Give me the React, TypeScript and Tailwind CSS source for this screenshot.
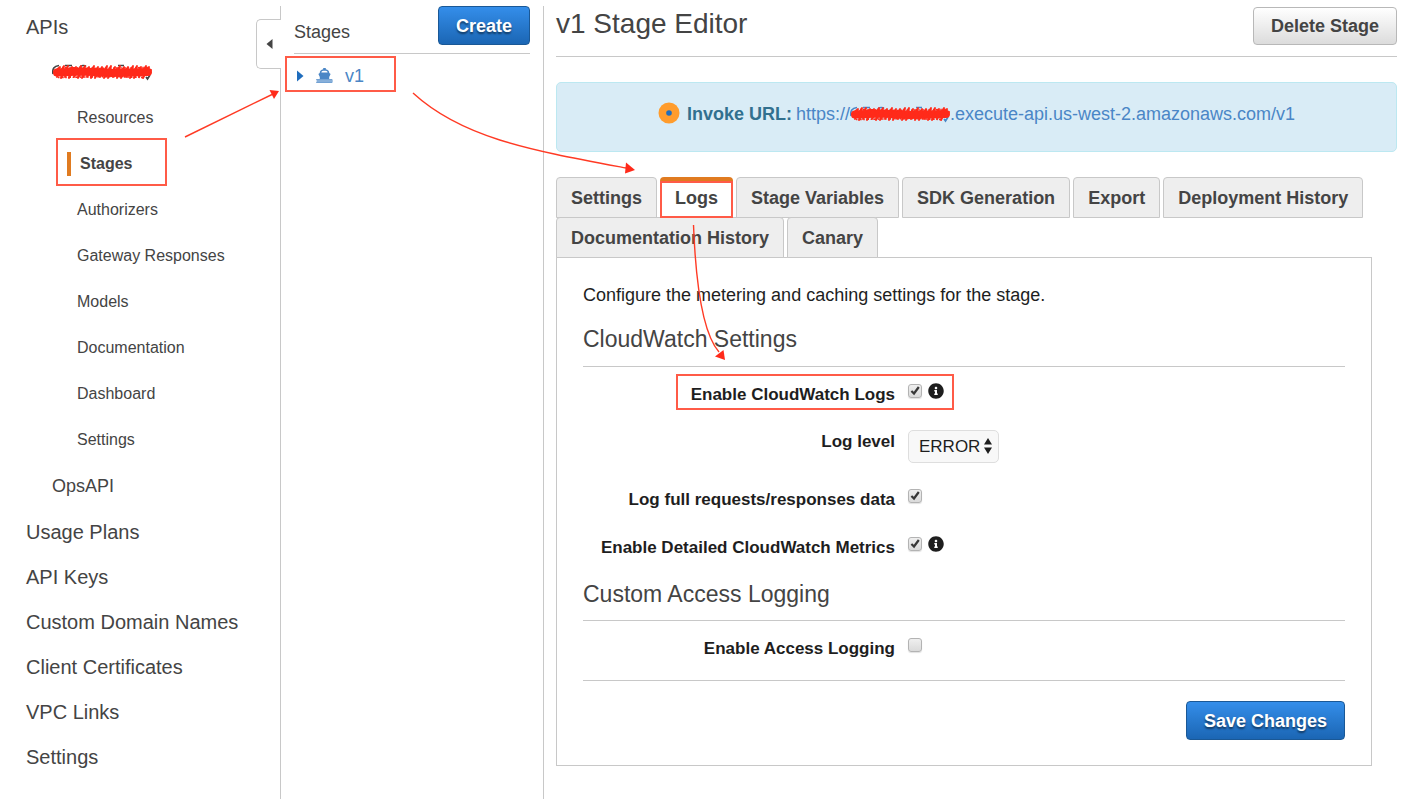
import type { ReactNode } from "react";
import { FaInfoCircle } from "react-icons/fa";

const apiSections = [
  "Resources",
  "Stages",
  "Authorizers",
  "Gateway Responses",
  "Models",
  "Documentation",
  "Dashboard",
  "Settings",
];

const accountSections = [
  "Usage Plans",
  "API Keys",
  "Custom Domain Names",
  "Client Certificates",
  "VPC Links",
  "Settings",
];

const tabs = [
  "Settings",
  "Logs",
  "Stage Variables",
  "SDK Generation",
  "Export",
  "Deployment History",
  "Documentation History",
  "Canary",
];

const scribblePath =
  "M2 9 L8 4 L5 14 L12 3 L9 15 L16 3 L13 14 L20 4 L17 15 L24 4 L22 14 L29 3 L26 15 L33 3 L30 15 L37 4 L35 14 L42 3 L39 15 L46 4 L43 15 L50 4 L48 14 L55 3 L52 15 L59 3 L56 15 L63 4 L61 14 L68 3 L65 15 L72 4 L69 15 L76 4 L74 14 L81 3 L78 15 L85 3 L82 15 L89 4 L87 14 L94 3 L91 15 L97 4 L95 12 L99 7";

function Scribble({ under }: { under: string }) {
  return (
    <svg width="100" height="18" viewBox="0 0 100 18" fill="none" aria-hidden="true">
      <path
        d="M1 11 C0 6 2 3 7 2.5 M13 2.5 H20 M28 4 C29 2 33 2 34 3.5 M66 2.5 H72 M94 14 L95.5 16 L98 12"
        stroke={under}
        strokeWidth="1.6"
      />
      <path d="M5 9.5 L30 8.5 L60 10 L96 9" stroke="#ff2a1a" strokeWidth="8" strokeLinecap="round" />
      <path d={scribblePath} stroke="#ff2a1a" strokeWidth="1.9" strokeLinejoin="round" strokeLinecap="round" />
      <path
        d="M6 14.5 L60 13.5 L92 14.5 M10 4.5 L45 5.5 L96 4.5"
        stroke="#ff2a1a"
        strokeWidth="1.6"
        strokeDasharray="1.5 1.2 3 1.6"
      />
    </svg>
  );
}

function Highlight({ className }: { className: string }) {
  return (
    <span
      aria-hidden="true"
      className={`pointer-events-none absolute border-2 border-[#ff5b47] ${className}`}
    />
  );
}

function ShipIcon() {
  return (
    <svg width="17" height="16" viewBox="0 0 17 16" aria-hidden="true">
      <g fill="#4a86c6">
        <path
          fillRule="evenodd"
          d="M7.2 0 H9.8 V1.2 C12 1.5 13.2 2.7 13.3 5 L14.6 6 L13.2 9 V11 H3.8 V9 L2.4 6 L3.7 5 C3.8 2.7 5 1.5 7.2 1.2 Z M5.4 4.6 H11.6 C11.5 3.5 10.9 3 9.8 2.8 H7.2 C6.1 3 5.5 3.5 5.4 4.6 Z"
        />
        <rect x="0.5" y="11" width="16" height="4" fillOpacity="0.55" />
      </g>
      <path d="M0.5 11.5 H16.5 M1.5 13 H16.5 M0.5 14.5 H16.5" stroke="#4a86c6" strokeWidth="1" strokeDasharray="1 1" />
    </svg>
  );
}

function PrimaryButton({ children }: { children: ReactNode }) {
  return (
    <button
      type="button"
      className="h-[39px] rounded-[4px] border border-[#1a5896] bg-linear-to-b from-[#348eea] to-[#1b66b4] px-[17px] text-[18px] leading-6 font-bold text-white [text-shadow:0_2px_2px_rgba(0,0,0,0.5)]"
    >
      {children}
    </button>
  );
}

function Check({ id, checked = false }: { id: string; checked?: boolean }) {
  return (
    <span className="relative mt-px block size-3.5">
      <input
        id={id}
        type="checkbox"
        defaultChecked={checked}
        className="peer block size-3.5 appearance-none rounded-[3px] border border-[#b3b3b3] bg-linear-to-b from-[#efefef] to-[#dadada] shadow-[0_1px_1px_rgba(0,0,0,0.12)]"
      />
      <svg
        viewBox="0 0 14 14"
        fill="none"
        stroke="#383838"
        aria-hidden="true"
        className="pointer-events-none absolute inset-0 hidden size-3.5 peer-checked:block"
      >
        <path d="M3.4 7 L6 9.5 L10.8 3" strokeWidth="2.2" />
      </svg>
    </span>
  );
}

function Info({ label }: { label: string }) {
  return (
    <button type="button" aria-label={label} className="ml-1.5 block text-[#1e1e1e]">
      <FaInfoCircle size={16} />
    </button>
  );
}

function Row({ id, label, className, children }: { id: string; label: string; className: string; children: ReactNode }) {
  return (
    <div className={`flex items-start gap-[13px] ${className}`}>
      <label htmlFor={id} className="w-[312px] shrink-0 text-right text-[17px] leading-6 font-bold whitespace-nowrap text-[#1e1e1e]">
        {label}
      </label>
      <div className="flex items-start">{children}</div>
    </div>
  );
}

function Sidebar() {
  return (
    <div className="flex w-[281px] shrink-0 pt-1.5">
      <nav aria-label="API Gateway" className="min-w-0 flex-1 text-[#444]">
        <a href="#apis" className="-mt-0.5 flex h-[45px] items-center pl-[26px] text-[20px]">
          APIs
        </a>
        <a href="#api" aria-label="Redacted API" className="flex h-[46px] items-center pl-[52px]">
          <Scribble under="#444" />
        </a>
        <ul className="text-[16px]">
          {apiSections.map((name) => (
            <li key={name} className="flex h-[46px] items-center">
              {name === "Stages" ? (
                <a href="#stages" aria-current="page" className="relative ml-[67px] border-l-4 border-[#e07b20] pl-[9px] leading-6 font-bold">
                  Stages
                  <Highlight className="-top-[14px] -left-[15px] h-12 w-[111px]" />
                </a>
              ) : (
                <a href={`#${name}`} className="pl-[77px] whitespace-nowrap">
                  {name}
                </a>
              )}
            </li>
          ))}
        </ul>
        <a href="#ops" className="flex h-[46px] items-center pl-[52px] text-[18px]">
          OpsAPI
        </a>
        <ul className="text-[20px]">
          {accountSections.map((name) => (
            <li key={name}>
              <a href={`#account-${name}`} className="flex h-[45px] items-center pl-[26px] whitespace-nowrap">
                {name}
              </a>
            </li>
          ))}
        </ul>
      </nav>
      <div className="flex w-[25px] shrink-0 flex-col">
        <div className="h-[13px] border-r border-[#c8c8c8]" />
        <button
          type="button"
          aria-label="Collapse navigation"
          className="flex h-[50px] items-center justify-center rounded-l-[5px] border border-r-0 border-[#c8c8c8]"
        >
          <svg width="7" height="10" viewBox="0 0 7 10" fill="#444" aria-hidden="true">
            <path d="M6.5 0 V10 L0.5 5 Z" />
          </svg>
        </button>
        <div className="flex-1 border-r border-[#c8c8c8]" />
      </div>
    </div>
  );
}

function StageList() {
  return (
    <section aria-label="Stages" className="flex w-[263px] shrink-0 pt-1.5">
      <div className="flex-1 border-r border-[#c8c8c8] px-[13px]">
        <div className="flex h-12 items-start justify-between border-b border-[#c8c8c8]">
          <h2 className="pt-3 text-[18px] leading-7 text-[#444]">Stages</h2>
          <PrimaryButton>Create</PrimaryButton>
        </div>
        <div className="relative mt-2.5 flex h-6 items-center">
          <button type="button" aria-label="Expand v1" className="ml-[3px] flex">
            <svg width="7" height="12" viewBox="0 0 7 12" fill="#1f6dbd" aria-hidden="true">
              <path d="M0 0.5 V11.5 L6.5 6 Z" />
            </svg>
          </button>
          <a href="#v1" className="ml-3 flex items-center gap-3 text-[18px] leading-6 text-[#4a86c6]">
            <ShipIcon />
            v1
          </a>
          <Highlight className="-top-2 -left-[9px] h-9 w-[111px]" />
        </div>
      </div>
    </section>
  );
}

function StageEditor() {
  return (
    <main className="min-w-0 flex-1 pt-1.5 pr-1.5 pb-8 pl-3">
      <header className="flex h-[51px] items-start justify-between border-b border-[#c8c8c8] pt-px">
        <h1 className="text-[28px] leading-[34px] text-[#444]">v1 Stage Editor</h1>
        <button
          type="button"
          className="h-[38px] rounded-[4px] border border-[#b8b8b8] bg-linear-to-b from-white to-[#dcdcdc] px-[17px] text-[18px] leading-6 font-bold text-[#444]"
        >
          Delete Stage
        </button>
      </header>

      <div className="mt-[25px] flex h-[70px] items-start justify-center rounded-[5px] border border-[#bce8f1] bg-[#d9ecf6] pt-[19px] text-[18px] leading-6">
        <svg width="22" height="22" viewBox="0 0 22 22" aria-hidden="true" className="mr-[7px]">
          <circle cx="11" cy="11" r="10.5" fill="#ff9c2c" />
          <circle cx="11" cy="11" r="2.8" fill="#1f6dbd" />
        </svg>
        <strong className="mr-1 text-[#31708f]">Invoke URL:</strong>
        <a href="#invoke" className="flex items-center text-[#4a86c6]">
          https://
          <Scribble under="#4a86c6" />
          .execute-api.us-west-2.amazonaws.com/v1
        </a>
      </div>

      <div className="pr-[25px]">
        <div role="tablist" aria-label="Stage settings" className="mt-[25px] flex flex-wrap gap-x-[3px]">
          {tabs.map((name) =>
            name === "Logs" ? (
              <button
                key={name}
                type="button"
                role="tab"
                aria-selected="true"
                className="relative -mb-px h-[41px] rounded-t-[4px] border-t-4 border-[#e07b20] px-[15px] pb-1 text-[18px] leading-6 font-bold text-[#444]"
              >
                {name}
                <Highlight className="inset-x-0 top-0 bottom-0" />
              </button>
            ) : (
              <button
                key={name}
                type="button"
                role="tab"
                aria-selected="false"
                className="-mb-px h-[41px] rounded-t-[4px] border border-[#c8c8c8] bg-[#eee] px-[14px] text-[18px] leading-6 font-bold text-[#444]"
              >
                {name}
              </button>
            ),
          )}
        </div>

        <form className="border border-[#c8c8c8] px-[26px] pt-[25px] pb-[25px]" onSubmit={(e) => e.preventDefault()}>
          <p className="text-[18px] leading-6 text-[#1e1e1e]">Configure the metering and caching settings for the stage.</p>

          <h2 className="mt-4 border-b border-[#c8c8c8] pb-[11px] text-[23px] leading-8 text-[#444]">CloudWatch Settings</h2>
          <div className="relative pt-4">
            <Row id="logs" label="Enable CloudWatch Logs" className="h-[47px]">
              <Check id="logs" checked />
              <Info label="About CloudWatch Logs" />
            </Row>
            <Highlight className="top-[7px] left-[93px] h-9 w-[278px]" />
            <Row id="level" label="Log level" className="h-[58px]">
              <span className="relative block">
                <select
                  id="level"
                  defaultValue="ERROR"
                  className="block h-[33px] w-[91px] appearance-none rounded-[5px] border border-[#dedede] bg-[#f8f8f8] pl-2.5 text-[17px] text-[#1e1e1e]"
                >
                  <option>ERROR</option>
                  <option>INFO</option>
                </select>
                <svg
                  width="8"
                  height="16"
                  viewBox="0 0 8 16"
                  fill="#1e1e1e"
                  aria-hidden="true"
                  className="pointer-events-none absolute top-2 right-[7px]"
                >
                  <path d="M4 0 L8 6.5 H0 Z M4 16 L8 9.5 H0 Z" />
                </svg>
              </span>
            </Row>
            <Row id="full" label="Log full requests/responses data" className="h-12">
              <Check id="full" checked />
            </Row>
            <Row id="metrics" label="Enable Detailed CloudWatch Metrics" className="h-10">
              <Check id="metrics" checked />
              <Info label="About detailed metrics" />
            </Row>
          </div>

          <h2 className="border-b border-[#c8c8c8] pt-0.5 pb-[10px] text-[23px] leading-8 text-[#444]">Custom Access Logging</h2>
          <div className="border-b border-[#c8c8c8] pt-4">
            <Row id="access" label="Enable Access Logging" className="h-[43px]">
              <Check id="access" />
            </Row>
          </div>
          <div className="mt-5 flex justify-end">
            <PrimaryButton>Save Changes</PrimaryButton>
          </div>
        </form>
      </div>
    </main>
  );
}

function Arrows() {
  return (
    <svg
      width="760"
      height="400"
      viewBox="0 0 760 400"
      fill="none"
      stroke="#ff3a24"
      strokeWidth="1.4"
      aria-hidden="true"
      className="pointer-events-none absolute top-0 left-0"
    >
      <path d="M185 137 L272 94.5" />
      <path d="M279 91 L269.5 90 L274 99 Z" fill="#ff2a1a" stroke="none" />
      <path d="M413 93 C462 138 530 150 626 168" />
      <path d="M635 170 L626 162.5 L625 173.5 Z" fill="#ff2a1a" stroke="none" />
      <path d="M693.5 225 C696 290 704 335 719 352" />
      <path d="M725 360 L723.5 350 L715 356.5 Z" fill="#ff2a1a" stroke="none" />
    </svg>
  );
}

export default function App() {
  return (
    <div className="relative flex min-h-screen bg-white font-['Liberation_Sans',Arial,sans-serif]">
      <Sidebar />
      <StageList />
      <StageEditor />
      <Arrows />
    </div>
  );
}
